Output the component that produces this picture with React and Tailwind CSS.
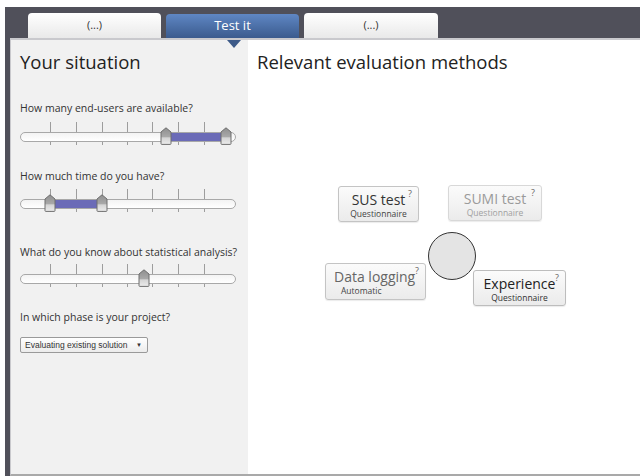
import React from "react";

const sans = { fontFamily: '"Open Sans", "Noto Sans", sans-serif' };
const arial = { fontFamily: '"Liberation Sans", Arial, sans-serif' };

function Thumb({ x }) {
  return (
    <svg
      className="absolute top-[5px]"
      style={{ left: x - 6 }}
      width="12"
      height="18"
      viewBox="0 0 12 18"
    >
      <defs>
        <linearGradient id="thumbg" x1="0" y1="0" x2="0" y2="1">
          <stop offset="0" stopColor="#8f8f8f" />
          <stop offset="0.55" stopColor="#a9a9a9" />
          <stop offset="0.6" stopColor="#d4d4d4" />
          <stop offset="1" stopColor="#ececec" />
        </linearGradient>
      </defs>
      <path
        d="M6 0.8 L11 5 L11 16.6 Q11 17.4 10.2 17.4 L1.8 17.4 Q1 17.4 1 16.6 L1 5 Z"
        fill="url(#thumbg)"
        stroke="#6f6f6f"
        strokeWidth="1"
      />
    </svg>
  );
}

function Slider({ thumbs, range }) {
  const ticks = [30, 56, 82, 107, 132, 158, 184];
  return (
    <div className="relative h-[24px] w-[216px]">
      {ticks.map((t) => (
        <div
          key={t}
          className="absolute top-0 h-[23px] w-px bg-[#9d9d9d]"
          style={{ left: t }}
        />
      ))}
      <div className="absolute left-0 top-[10px] h-[10px] w-[216px] rounded-full border border-[#a8a8a8] bg-gradient-to-b from-[#f3f3f3] to-white" />
      {range && (
        <div
          className="absolute top-[11px] h-[8px] bg-[#6b6bb7]"
          style={{ left: range[0], width: range[1] - range[0] }}
        />
      )}
      {thumbs.map((x) => (
        <Thumb key={x} x={x} />
      ))}
    </div>
  );
}

function Card({ title, sub, left, top, w, h, titleColor, subColor, border, subAlign }) {
  return (
    <div
      className={`absolute flex flex-col rounded-[3px] border bg-gradient-to-b from-[#fbfbfb] to-[#ebebeb] shadow-[0_1px_1px_rgba(0,0,0,0.08)] ${border}`}
      style={{ left, top, width: w, height: h }}
    >
      <span className="absolute right-[6px] top-[2px] text-[9px] leading-none text-[#666]" style={sans}>
        ?
      </span>
      <div
        className={`mt-[5px] px-[8px] text-[14px] leading-[16px] ${titleColor} ${subAlign === "left" ? "text-left" : "text-center"}`}
        style={sans}
      >
        {title}
      </div>
      <div
        className={`text-[8.5px] leading-[11px] ${subColor} ${subAlign === "left" ? "pl-[15px] text-left" : "text-center"}`}
        style={sans}
      >
        {sub}
      </div>
    </div>
  );
}

export default function App() {
  return (
    <div className="h-[476px] w-[640px] overflow-hidden bg-white pl-[5px] pt-[7px]">
      <div className="flex h-[469px] flex-col bg-[#50505a] pl-[5px]">
        {/* tab strip */}
        <div className="flex h-[31px] items-end gap-[5px] pl-[18px]">
          <div
            className="flex h-[25px] w-[133px] items-center justify-center rounded-t-[4px] bg-gradient-to-b from-white to-[#e9e9e9] text-[11px] text-[#333]"
            style={sans}
          >
            (...)
          </div>
          <div
            className="flex h-[24px] w-[133px] items-center justify-center rounded-t-[4px] bg-gradient-to-b from-[#5f87c4] to-[#3b5b8e] text-[13px] text-white"
            style={sans}
          >
            Test it
          </div>
          <div
            className="flex h-[25px] w-[134px] items-center justify-center rounded-t-[4px] bg-gradient-to-b from-white to-[#e9e9e9] text-[11px] text-[#333]"
            style={sans}
          >
            (...)
          </div>
        </div>

        {/* content */}
        <div className="relative flex flex-1 border-l border-t-2 border-b-2 border-[#c9c9cd] border-b-[#a9a9a9]">
          {/* pointer under the active tab */}
          <div className="absolute left-[216px] top-0 h-0 w-0 border-l-[7px] border-r-[7px] border-t-[8px] border-l-transparent border-r-transparent border-t-[#3d5a88]" />

          <div className="flex w-[237px] flex-col bg-[#f1f1f1] pl-[9px] pt-[10px]" style={sans}>
            <div className="text-[18.5px] leading-[24px] text-[#222]">Your situation</div>

            <div className="mt-[27px] text-[10.5px] leading-[14px] text-[#333]">
              How many end-users are available?
            </div>
            <div className="mt-[7px]">
              <Slider thumbs={[146, 206]} range={[146, 206]} />
            </div>

            <div className="mt-[23px] text-[10.5px] leading-[14px] text-[#333]">How much time do you have?</div>
            <div className="mt-[6px]">
              <Slider thumbs={[30, 82]} range={[30, 82]} />
            </div>

            <div className="mt-[32px] text-[10.5px] leading-[14px] text-[#333]">
              What do you know about statistical analysis?
            </div>
            <div className="mt-[5px]">
              <Slider thumbs={[124]} />
            </div>

            <div className="mt-[22px] text-[10.5px] leading-[14px] text-[#333]">In which phase is your project?</div>
            <div
              className="mt-[13px] flex h-[16px] w-[128px] items-center justify-between rounded-[2px] border border-[#9a9a9a] bg-gradient-to-b from-white to-[#ececec] pl-[4px] pr-[5px] text-[8.5px] text-[#333]"
              style={arial}
            >
              <span>Evaluating existing solution</span>
              <span className="text-[6px]">▼</span>
            </div>
          </div>

          <div className="relative flex-1 bg-white">
            <div className="pl-[9px] pt-[10px] text-[18.5px] leading-[24px] text-[#222]" style={sans}>
              Relevant evaluation methods
            </div>

            <Card
              title="SUS test"
              sub="Questionnaire"
              left={90}
              top={146}
              w={81}
              h={36}
              titleColor="text-[#333]"
              subColor="text-[#444]"
              border="border-[#c4c4c4]"
            />
            <Card
              title="SUMI test"
              sub="Questionnaire"
              left={200}
              top={145}
              w={94}
              h={36}
              titleColor="text-[#9a9a9a]"
              subColor="text-[#a0a0a0]"
              border="border-[#d8d8d8]"
            />
            <Card
              title="Data logging"
              sub="Automatic"
              left={77}
              top={223}
              w={101}
              h={37}
              titleColor="text-[#666]"
              subColor="text-[#444]"
              border="border-[#c4c4c4]"
              subAlign="left"
            />
            <Card
              title="Experience"
              sub="Questionnaire"
              left={225}
              top={230}
              w={93}
              h={36}
              titleColor="text-[#222]"
              subColor="text-[#333]"
              border="border-[#bdbdbd]"
            />

            <div className="absolute left-[180px] top-[192px] h-[48px] w-[48px] rounded-full border-[1.5px] border-[#333] bg-[#e4e4e4]" />
          </div>
        </div>
      </div>
    </div>
  );
}
